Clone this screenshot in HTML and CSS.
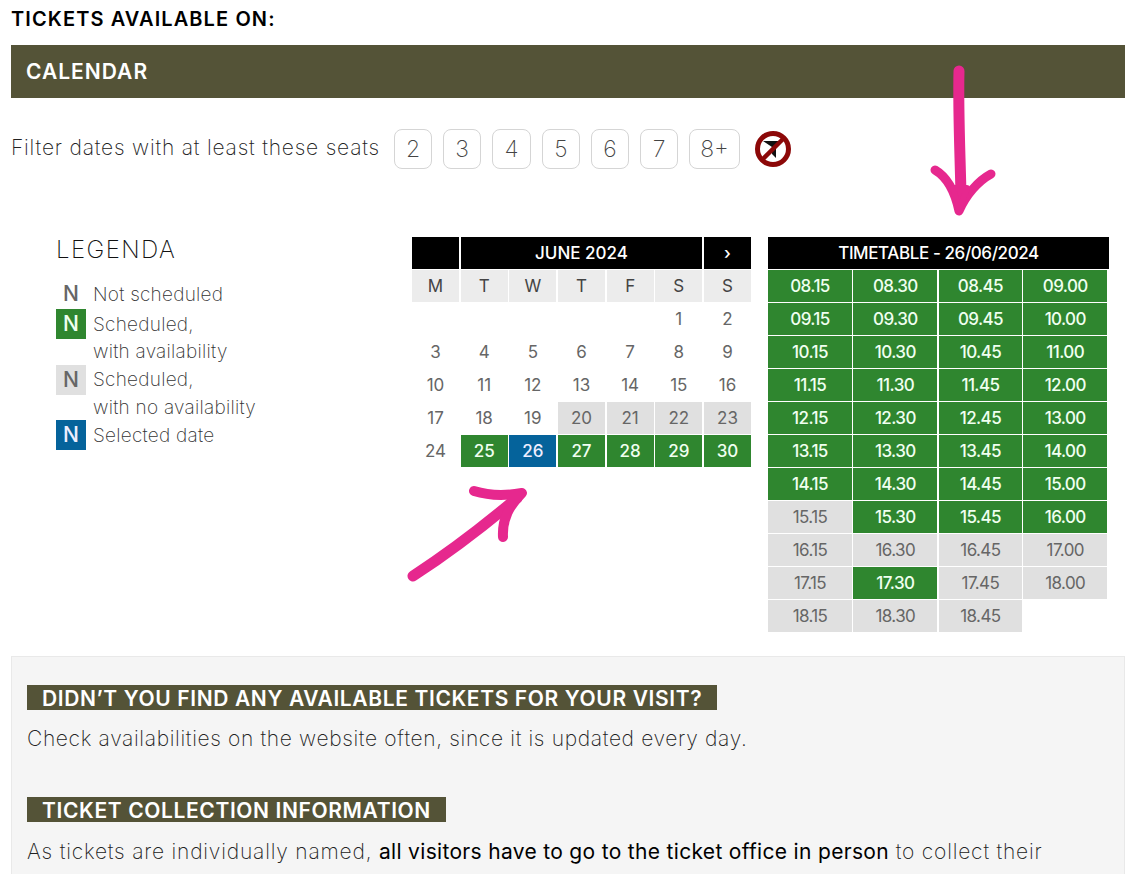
FILE: index.html
```html
<!DOCTYPE html>
<html lang="en">
<head>
<meta charset="utf-8">
<title>Tickets calendar</title>
<link rel="stylesheet" href="styles.css">
</head>
<body>
<h2 class="page-title">TICKETS AVAILABLE ON:</h2>
<div class="bar">CALENDAR</div>
<div class="filter">
  <span class="filter-label">Filter dates with at least these seats</span>
  <div class="seats">
    <button class="seat">2</button><button class="seat">3</button><button class="seat seat-mid">4</button><button class="seat">5</button><button class="seat">6</button><button class="seat">7</button><button class="seat seat-wide">8+</button>
  </div>
  <svg class="nofilter" viewBox="0 0 36 36" width="36" height="36">
    <path d="M8 10H25L21 16V27L17 23V16Z" fill="#111"/>
    <circle cx="18" cy="18" r="15.5" fill="none" stroke="#8c0808" stroke-width="5"/>
    <path d="M7 29L29 7" stroke="#8c0808" stroke-width="4.5"/>
  </svg>
</div>
<div class="booking">
  <aside class="legend">
    <div class="legend-title">LEGENDA</div>
    <div class="legend-row"><span class="sw">N</span><span class="lt">Not scheduled</span></div>
    <div class="legend-row"><span class="sw on">N</span><span class="lt">Scheduled,<br>with availability</span></div>
    <div class="legend-row"><span class="sw off">N</span><span class="lt">Scheduled,<br>with no availability</span></div>
    <div class="legend-row"><span class="sw sel">N</span><span class="lt">Selected date</span></div>
  </aside>
  <div class="cal">
    <div class="hd"></div><div class="hd span5">JUNE 2024</div><div class="hd">›</div>
    <div class="wd">M</div><div class="wd">T</div><div class="wd">W</div><div class="wd">T</div><div class="wd">F</div><div class="wd">S</div><div class="wd">S</div>
    <div class="d"></div><div class="d"></div><div class="d"></div><div class="d"></div><div class="d"></div><div class="d">1</div><div class="d">2</div>
    <div class="d">3</div><div class="d">4</div><div class="d">5</div><div class="d">6</div><div class="d">7</div><div class="d">8</div><div class="d">9</div>
    <div class="d">10</div><div class="d">11</div><div class="d">12</div><div class="d">13</div><div class="d">14</div><div class="d">15</div><div class="d">16</div>
    <div class="d">17</div><div class="d">18</div><div class="d">19</div><div class="d off">20</div><div class="d off">21</div><div class="d off">22</div><div class="d off">23</div>
    <div class="d">24</div><div class="d on">25</div><div class="d sel">26</div><div class="d on">27</div><div class="d on">28</div><div class="d on">29</div><div class="d on">30</div>
  </div>
  <div class="times">
    <div class="hd span4">TIMETABLE - 26/06/2024</div>
    <div class="t on">08.15</div><div class="t on">08.30</div><div class="t on">08.45</div><div class="t on">09.00</div>
    <div class="t on">09.15</div><div class="t on">09.30</div><div class="t on">09.45</div><div class="t on">10.00</div>
    <div class="t on">10.15</div><div class="t on">10.30</div><div class="t on">10.45</div><div class="t on">11.00</div>
    <div class="t on">11.15</div><div class="t on">11.30</div><div class="t on">11.45</div><div class="t on">12.00</div>
    <div class="t on">12.15</div><div class="t on">12.30</div><div class="t on">12.45</div><div class="t on">13.00</div>
    <div class="t on">13.15</div><div class="t on">13.30</div><div class="t on">13.45</div><div class="t on">14.00</div>
    <div class="t on">14.15</div><div class="t on">14.30</div><div class="t on">14.45</div><div class="t on">15.00</div>
    <div class="t off">15.15</div><div class="t on">15.30</div><div class="t on">15.45</div><div class="t on">16.00</div>
    <div class="t off">16.15</div><div class="t off">16.30</div><div class="t off">16.45</div><div class="t off">17.00</div>
    <div class="t off">17.15</div><div class="t on">17.30</div><div class="t off">17.45</div><div class="t off">18.00</div>
    <div class="t off">18.15</div><div class="t off">18.30</div><div class="t off">18.45</div>
  </div>
</div>
<section class="info">
  <h3 class="tag">DIDN’T YOU FIND ANY AVAILABLE TICKETS FOR YOUR VISIT?</h3>
  <p class="para">Check availabilities on the website often, since it is updated every day.</p>
  <h3 class="tag tag-second">TICKET COLLECTION INFORMATION</h3>
  <p class="para para-wide">As tickets are individually named, <strong>all visitors have to go to the ticket office in person</strong> to collect their</p>
</section>
<svg class="arrows" viewBox="0 0 1137 874" width="1137" height="874">
  <g fill="none" stroke="#e6288e" stroke-linecap="round" stroke-linejoin="round">
    <path d="M959 71C958 110 960 150 961 195" stroke-width="11"/>
    <path d="M935 170C947 177 955 192 959 211C966 195 978 181 991 174" stroke-width="9"/>
    <path d="M953 188L959 211L967 188Z" stroke-width="6" fill="#e6288e"/>
    <path d="M413 576C450 552 485 525 517 498" stroke-width="11"/>
    <path d="M474 491C490 496 505 496 522 493C510 505 502 518 503 537" stroke-width="10"/>
  </g>
</svg>
</body>
</html>
```
FILE: styles.css
```css
* { box-sizing: border-box; }
html, body { margin: 0; height: 874px; overflow: hidden; background: #fff; }
body {
  position: relative;
  padding: 9px 12px 0 11px;
  font-family: Inter, "Liberation Sans", sans-serif;
  color: #333;
}
.page-title {
  margin: 0 0 15px;
  font-size: 20px;
  line-height: 21px;
  font-weight: 600;
  letter-spacing: 1.1px;
  color: #000;
}
.bar {
  height: 53px;
  padding-left: 15px;
  display: flex;
  align-items: center;
  background: #545337;
  color: #fff;
  font-size: 21px;
  font-weight: 600;
  letter-spacing: 1px;
}
.filter {
  display: flex;
  align-items: center;
  margin-top: 31px;
  height: 40px;
}
.filter-label {
  width: 383px;
  padding-bottom: 4px;
  font-size: 21px;
  font-weight: 250;
  letter-spacing: .8px;
  color: #222;
}
.seats { display: flex; gap: 11px; }
.seat {
  width: 38px;
  height: 40px;
  padding: 0;
  border: 1px solid #d5d5d5;
  border-radius: 8px;
  background: #fff;
  font: 200 23px Inter, sans-serif;
  color: #444;
}
.seat-mid { width: 39px; }
.seat-wide { width: 51px; }
.nofilter { margin-left: 15px; }
.booking {
  display: flex;
  align-items: flex-start;
  margin-top: 68px;
  padding-left: 45px;
}
.legend { width: 356px; }
.legend-title {
  height: 42px;
  font-size: 24px;
  line-height: 25px;
  font-weight: 250;
  letter-spacing: 1.4px;
  color: #111;
}
.legend-row {
  display: flex;
  align-items: flex-start;
  gap: 7px;
  font-size: 19px;
  font-weight: 250;
  letter-spacing: .25px;
  line-height: 27.5px;
  color: #333;
}
.sw {
  flex: none;
  width: 30px;
  height: 30px;
  display: flex;
  align-items: center;
  justify-content: center;
  font-size: 21px;
  font-weight: 500;
  letter-spacing: 0;
  color: #666;
}
.lt { padding-top: 1.5px; margin-bottom: -1px; }
.wd, .d, .t {
  display: flex;
  align-items: center;
  justify-content: center;
  font-size: 17px;
}
.wd { background: #ececec; color: #444; font-weight: 400; }
.d { color: #666; font-weight: 400; }
.t { letter-spacing: -.6px; }
.sw.on, .d.on, .t.on { background: #2f862f; color: #f0fff0; font-weight: 500; }
.sw.off, .d.off, .t.off { background: #e0e0e0; color: #666; font-weight: 400; }
.sw.sel, .d.sel { background: #05639b; color: #eef; font-weight: 500; }
.sw.off { font-weight: 500; }
.cal {
  flex: none;
  width: 339px;
  display: grid;
  grid-template-columns: repeat(7, 1fr);
  column-gap: 1.67px;
  row-gap: 1px;
  grid-auto-rows: 32px;
}
.hd {
  background: #000;
  color: #fff;
  display: flex;
  align-items: center;
  justify-content: center;
  font-size: 17px;
  font-weight: 500;
}
.span5 { grid-column: span 5; }
.span4 { grid-column: 1 / -1; margin-right: -2px; letter-spacing: -.4px; }
.times {
  flex: none;
  width: 339px;
  margin-left: 17px;
  display: grid;
  grid-template-columns: 84px 84px 83.5px 83.5px;
  column-gap: 1.33px;
  row-gap: 1px;
  grid-auto-rows: 32px;
}
.info {
  margin-top: 24px;
  height: 230px;
  padding: 28px 15px 0;
  background: #f5f5f5;
  border: 1px solid #e9e9e9;
}
.tag {
  width: fit-content;
  margin: 0;
  padding: 0 15px;
  height: 25px;
  line-height: 27px;
  background: #545337;
  color: #fff;
  font-size: 21px;
  font-weight: 600;
  letter-spacing: .62px;
}
.tag-second { margin-top: 43px; }
.para {
  margin: 14px 0 0;
  font-size: 21px;
  line-height: 30px;
  font-weight: 250;
  letter-spacing: .65px;
  color: #222;
}
.para-wide { margin-top: 15px; letter-spacing: .8px; }
.para strong { font-weight: 400; letter-spacing: .32px; color: #000; }
.arrows { position: absolute; left: 0; top: 0; pointer-events: none; }
```
